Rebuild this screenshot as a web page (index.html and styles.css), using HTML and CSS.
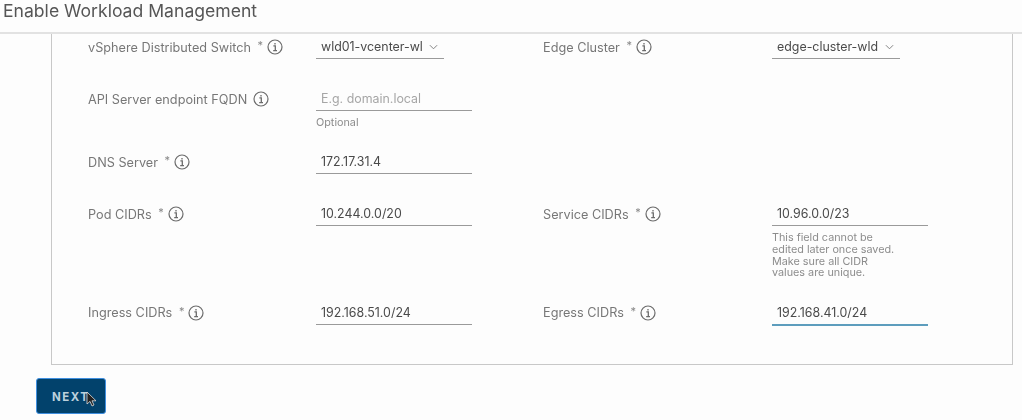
FILE: index.html
```html
<!DOCTYPE html>
<html lang="en">
<head>
    <meta charset="UTF-8">
    <meta name="viewport" content="width=device-width, initial-scale=1.0">
    <title>Enable Workload Management</title>
    <link rel="stylesheet" href="styles.css">
</head>
<body>
    <svg class="defs" width="0" height="0">
        <symbol id="info" viewBox="0 0 16 16">
            <circle cx="8" cy="8" r="7" fill="none" stroke="currentColor" stroke-width="1.2"/>
            <path d="M6.4 6.9H8.3V11.6M6.2 11.7H10M8 4V5.4" fill="none" stroke="currentColor" stroke-width="1.3"/>
        </symbol>
        <symbol id="chevron" viewBox="0 0 10 6">
            <path d="M1 1L5 5L9 1" fill="none" stroke="currentColor" stroke-width="1"/>
        </symbol>
    </svg>
    <div class="header">
        <h1>Enable Workload Management</h1>
    </div>
    <div class="content">
        <form class="panel">
            <div class="row">
                <div class="field">
                    <div class="label">vSphere Distributed Switch <span class="req">*</span><svg class="info"><use href="#info"/></svg></div>
                    <div class="select"><span class="value">wld01-vcenter-wl</span><svg class="chevron"><use href="#chevron"/></svg></div>
                </div>
                <div class="field">
                    <div class="label">Edge Cluster <span class="req">*</span><svg class="info"><use href="#info"/></svg></div>
                    <div class="select"><span class="value">edge-cluster-wld</span><svg class="chevron"><use href="#chevron"/></svg></div>
                </div>
            </div>
            <div class="row has-hint">
                <div class="field">
                    <div class="label">API Server endpoint FQDN<svg class="info"><use href="#info"/></svg></div>
                    <div class="control">
                        <div class="input placeholder">E.g. domain.local</div>
                        <p class="hint">Optional</p>
                    </div>
                </div>
            </div>
            <div class="row">
                <div class="field">
                    <div class="label">DNS Server <span class="req">*</span><svg class="info"><use href="#info"/></svg></div>
                    <div class="control"><div class="input">172.17.31.4</div></div>
                </div>
            </div>
            <div class="row has-hint">
                <div class="field">
                    <div class="label">Pod CIDRs <span class="req">*</span><svg class="info"><use href="#info"/></svg></div>
                    <div class="control"><div class="input">10.244.0.0/20</div></div>
                </div>
                <div class="field">
                    <div class="label">Service CIDRs <span class="req">*</span><svg class="info"><use href="#info"/></svg></div>
                    <div class="control">
                        <div class="input">10.96.0.0/23</div>
                        <p class="hint">This field cannot be<br>edited later once saved.<br>Make sure all CIDR<br>values are unique.</p>
                    </div>
                </div>
            </div>
            <div class="row last">
                <div class="field">
                    <div class="label">Ingress CIDRs <span class="req">*</span><svg class="info"><use href="#info"/></svg></div>
                    <div class="control"><div class="input">192.168.51.0/24</div></div>
                </div>
                <div class="field">
                    <div class="label">Egress CIDRs <span class="req">*</span><svg class="info"><use href="#info"/></svg></div>
                    <div class="control"><div class="input active">192.168.41.0/24</div></div>
                </div>
            </div>
        </form>
        <div class="btn">
            <button type="button">NEXT</button>
            <svg class="cursor" width="12" height="16" viewBox="0 0 12 16">
                <path d="M1 1V13L4 10.4L6 15L8 14L6 9.8H10Z" fill="#222" stroke="#ddd" stroke-width="0.8"/>
            </svg>
        </div>
    </div>
</body>
</html>
```

FILE: styles.css
```css
* {
    margin: 0;
    padding: 0;
    box-sizing: border-box;
}
html, body {
    height: 100%;
    overflow: hidden;
}
body {
    background-color: #fdfdfd;
    font-family: "Inter", "Liberation Sans", sans-serif;
    filter: blur(0.4px);
}
.defs {
    display: block;
}
.header {
    height: 34px;
    padding-left: 3px;
    border-bottom: 2px solid #e2e2e2;
}
.header h1 {
    font-size: 17.6px;
    font-weight: 400;
    line-height: 21px;
    color: #565656;
}
.content {
    padding-left: 51px;
    padding-right: 9px;
}
.panel {
    height: 331px;
    border: 1px solid #c8c8c8;
    border-top: none;
    padding-top: 1px;
    padding-left: 36px;
}
.row {
    display: flex;
    margin-bottom: 28px;
}
.row.has-hint {
    margin-bottom: 21.5px;
}
.row.last {
    margin-bottom: 0;
}
.field {
    display: flex;
    width: 455px;
}
.label {
    width: 228px;
    height: 24px;
    display: flex;
    align-items: center;
    font-size: 12.7px;
    color: #777;
    white-space: pre-wrap;
}
.field + .field .label {
    width: 229px;
}
.req {
    margin-left: 3px;
    margin-bottom: 4px;
    font-size: 11px;
    color: #888;
}
.info {
    width: 16px;
    height: 16px;
    margin-left: 4px;
    color: #6b6b6b;
}
.label:not(:has(.req)) .info {
    margin-left: 6px;
}
.control {
    width: 156px;
}
.input, .select {
    height: 24px;
    padding-left: 5px;
    border-bottom: 1px solid #9a9a9a;
    font-size: 12.4px;
    line-height: 24px;
    color: #4a4a4a;
}
.select {
    display: flex;
    align-items: center;
    width: 128px;
}
.value {
    width: 102px;
    flex-shrink: 0;
    white-space: nowrap;
}
.chevron {
    width: 9px;
    height: 6px;
    margin-left: 6px;
    color: #777;
}
.placeholder {
    color: #a6a6a6;
}
.input.active {
    height: 25px;
    border-bottom: 2px solid #5d9dbd;
}
.hint {
    margin-top: 6px;
    font-size: 10.8px;
    line-height: 11.7px;
    color: #8c8c8c;
}
.btn {
    position: relative;
    width: 70px;
    margin-top: 13px;
    margin-left: -15px;
}
.btn button {
    width: 70px;
    height: 36px;
    padding-top: 1px;
    padding-left: 15px;
    text-align: left;
    background-color: #02426c;
    border: 1px solid #3f8fe0;
    border-radius: 3px;
    font-family: inherit;
    font-size: 11.5px;
    font-weight: 700;
    letter-spacing: 1.5px;
    color: #bcd0dc;
}
.cursor {
    position: absolute;
    left: 50px;
    top: 13px;
}
```
